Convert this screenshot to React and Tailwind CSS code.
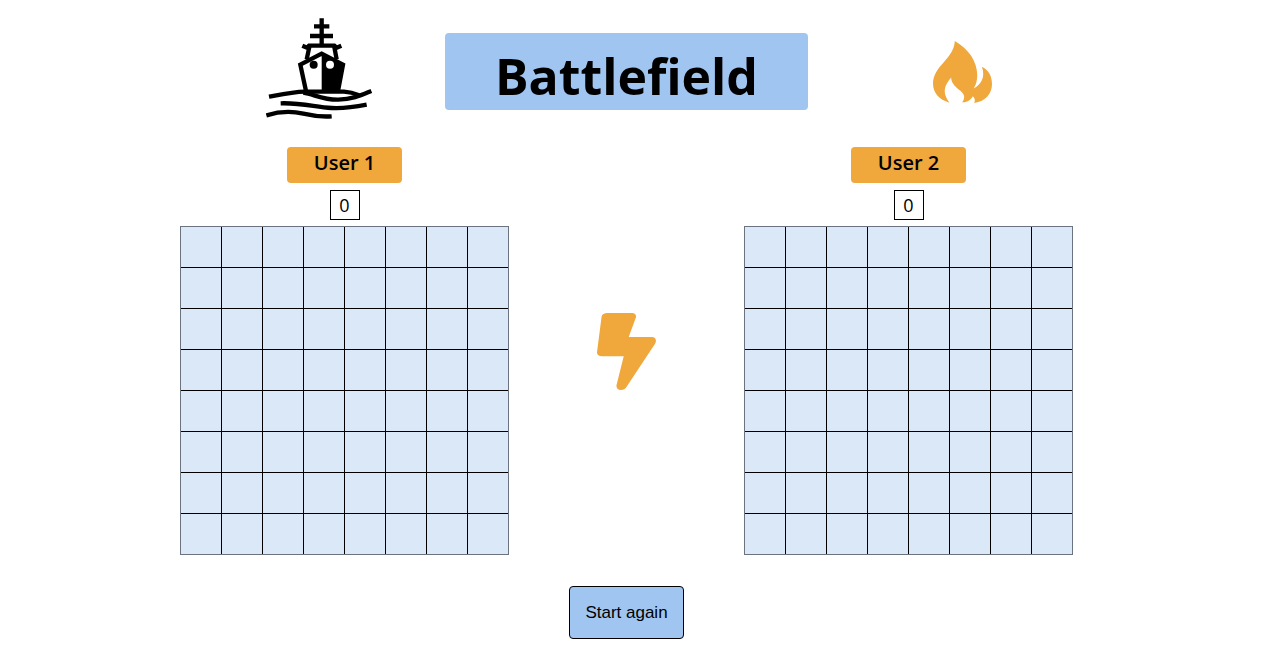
import React from 'react';

const CELLS = Array.from({ length: 64 }, (_, i) => i);

function ShipIcon() {
  return (
    <svg viewBox="18 22 318 303" className="h-[101px] w-[106px]" fill="none" stroke="#000" strokeWidth="13" aria-hidden="true">
      <path d="M185 23V104M162 47H208M150 76H219" />
      <path d="M127 105L141 111L147 105H223L230 111L244 105M149 104L140 146M222 104L230 146" />
      <path d="M138 241L121 162L185 129L249 162L234 241" />
      <path d="M185 131L250 162L237 241H185Z" fill="#000" stroke="none" />
      <circle cx="161" cy="162" r="12" fill="#000" stroke="none" />
      <circle cx="210" cy="162" r="12" fill="#fff" stroke="none" />
      <path d="M27 258C65 251 98 244 135 243H252C273 244 288 250 297 254" />
      <path d="M130 246C162 251 190 268 235 267C278 266 305 253 334 241" />
      <path d="M62 278C125 276 165 289 215 292C255 294 290 288 320 282" />
      <path d="M19 314C58 302 96 301 130 309C160 316 186 319 215 317" />
    </svg>
  );
}

function FlameIcon() {
  return (
    <svg viewBox="0 0 176 185" className="h-[62px] w-[59px]" fill="#f0a73b" aria-hidden="true">
      <path d="M65 0C63 53 0 75 0 127C0 155 18 175 49 184C26 154 34 133 54 109C56 141 93 147 93 166C93 173 91 177 87 183C103 184 113 175 119 165C126 173 126 178 123 185C157 179 176 157 176 128C176 104 164 85 146 77C157 109 143 131 121 142C129 130 132 116 132 103C132 60 106 24 65 0Z" />
    </svg>
  );
}

function BoltIcon() {
  return (
    <svg viewBox="0 0 320 512" preserveAspectRatio="none" className="h-[77px] w-[59px]" fill="#f0a73b" aria-hidden="true">
      <path d="M296 160H172L211 30C215 15 206 0 190 0H56C40 0 27 8 25 24L0 261C-1 276 10 288 26 288H145L106 478C103 496 112 512 130 512C141 512 150 507 156 499L315 204C325 182 319 160 296 160Z" />
    </svg>
  );
}

function Player({ name, score }) {
  return (
    <section className="flex flex-col items-center">
      <h2 className="flex h-9 w-[115px] justify-center rounded bg-[#f0a73b] font-['Open_Sans','Noto_Sans',sans-serif] text-xl leading-8 font-semibold">
        {name}
      </h2>
      <output aria-label={`${name} score`} className="mt-[7px] mb-1.5 flex size-[30px] justify-center border border-black font-['Open_Sans','Noto_Sans',sans-serif] text-lg leading-7">
        {score}
      </output>
      <div className="grid grid-cols-8 gap-px border border-[#6b7280] bg-black">
        {CELLS.map((i) => (
          <button
            key={i}
            type="button"
            aria-label={`${name}, row ${Math.floor(i / 8) + 1}, column ${(i % 8) + 1}`}
            className="size-10 bg-[#dbe8f8]"
          />
        ))}
      </div>
    </section>
  );
}

export default function App() {
  return (
    <main className="flex flex-col items-center bg-white pt-[18px] pr-[27px] pb-8 text-black">
      <header className="flex items-start justify-center gap-[73px]">
        <div className="flex w-[111px] justify-end">
          <ShipIcon />
        </div>
        <h1 className="mt-[15px] flex h-[77px] w-[363px] items-center justify-center rounded bg-[#9fc5f0] pt-2 font-['Open_Sans','Noto_Sans',sans-serif] text-[50px] leading-none font-bold">
          Battlefield
        </h1>
        <div className="flex w-[111px] justify-end pt-[23px]">
          <FlameIcon />
        </div>
      </header>
      <div className="mt-7 flex items-center justify-center gap-[88px]">
        <Player name="User 1" score={0} />
        <BoltIcon />
        <Player name="User 2" score={0} />
      </div>
      <button
        type="button"
        className="mt-[31px] h-[53px] w-[115px] rounded border border-black bg-[#9fc5f0] font-['Liberation_Sans',Arial,sans-serif] text-[17px]"
      >
        Start again
      </button>
    </main>
  );
}
